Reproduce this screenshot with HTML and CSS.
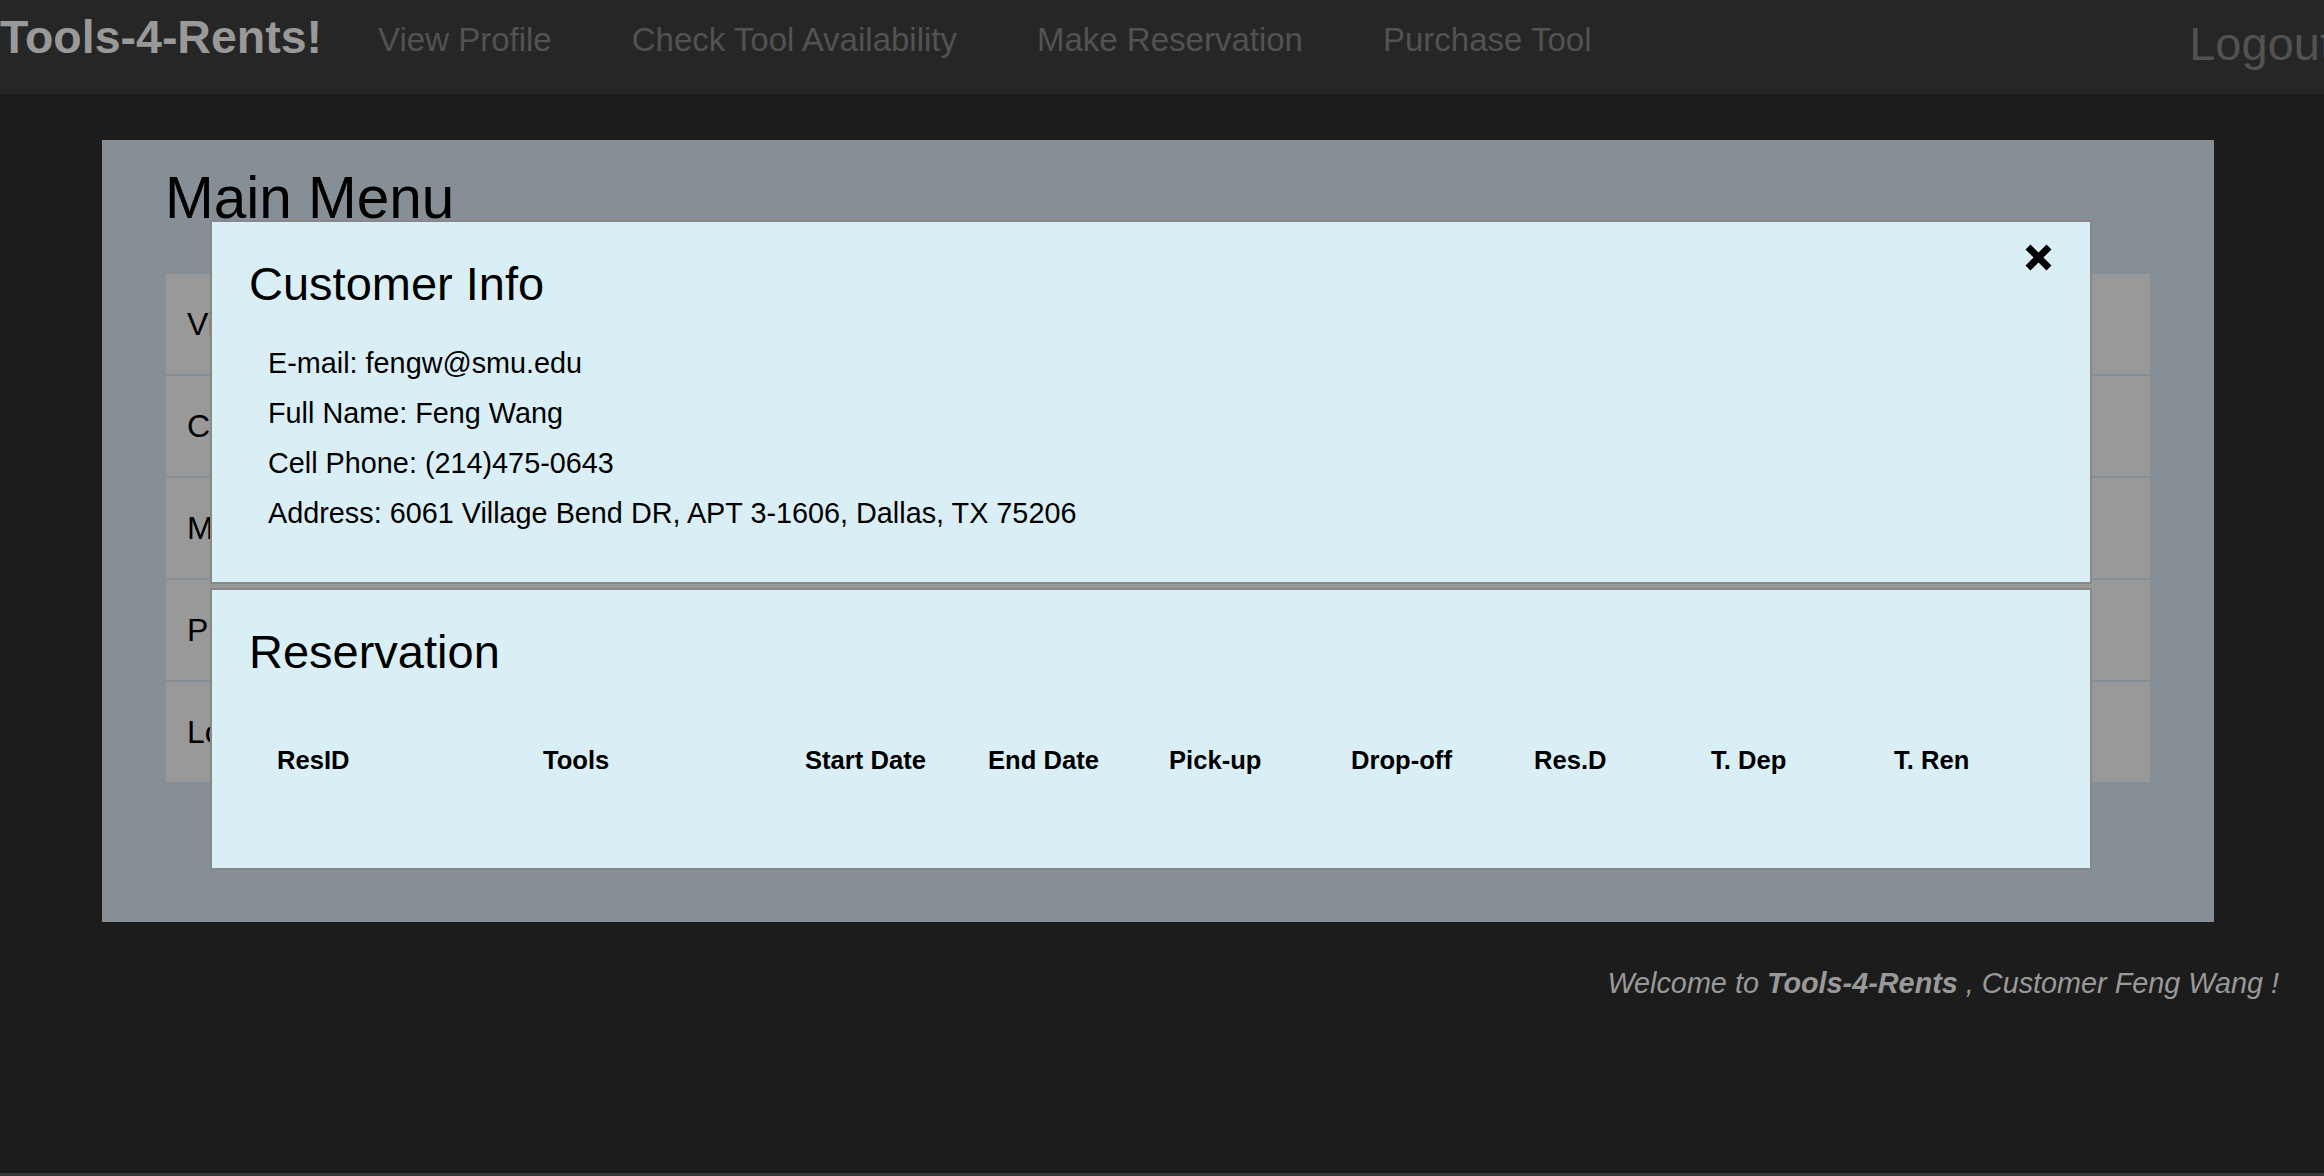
FILE: index.html
```html
<!DOCTYPE html>
<html lang="en">
<head>
<meta charset="utf-8">
<title>Tools-4-Rents!</title>
<link rel="stylesheet" href="styles.css">
</head>
<body>
<header class="navbar">
  <a class="brand">Tools-4-Rents!</a>
  <nav class="nav-links">
    <a class="nav-link">View Profile</a>
    <a class="nav-link">Check Tool Availability</a>
    <a class="nav-link">Make Reservation</a>
    <a class="nav-link">Purchase Tool</a>
  </nav>
  <a class="logout">Logout</a>
</header>

<main class="page">
  <section class="panel">
    <h1 class="panel-title">Main Menu</h1>
    <ul class="menu-list">
      <li class="menu-item">View Profile</li>
      <li class="menu-item">Check Tool Availability</li>
      <li class="menu-item">Make Reservation</li>
      <li class="menu-item">Purchase Tool</li>
      <li class="menu-item">Logout</li>
    </ul>
  </section>
  <p class="welcome">Welcome to <b>Tools-4-Rents</b> , Customer Feng Wang !</p>

  <div class="modal">
    <div class="modal-box info-box">
      <button class="close" aria-label="Close">
        <svg viewBox="0 0 29 29" width="29" height="29"><path d="M4 4L25 25M25 4L4 25" stroke="#000" stroke-width="7" fill="none"/></svg>
      </button>
      <h2 class="modal-title">Customer Info</h2>
      <div class="info-lines">
        <p class="info-line">E-mail: fengw@smu.edu</p>
        <p class="info-line">Full Name: Feng Wang</p>
        <p class="info-line">Cell Phone: (214)475-0643</p>
        <p class="info-line">Address: 6061 Village Bend DR, APT 3-1606, Dallas, TX 75206</p>
      </div>
    </div>
    <div class="modal-box res-box">
      <h2 class="modal-title">Reservation</h2>
      <div class="res-head">
        <span>ResID</span>
        <span>Tools</span>
        <span>Start Date</span>
        <span>End Date</span>
        <span>Pick-up</span>
        <span>Drop-off</span>
        <span>Res.D</span>
        <span>T. Dep</span>
        <span>T. Ren</span>
      </div>
    </div>
  </div>
</main>
<div class="bottom-bar"></div>
</body>
</html>
```

FILE: styles.css
```css
html {
  background: #1c1c1c;
}
body {
  margin: 0;
  width: 2324px;
  height: 1176px;
  overflow: hidden;
  background: #1c1c1c;
  font-family: "Liberation Sans", Arial, Helvetica, sans-serif;
  position: relative;
}
a { text-decoration: none; }

.navbar {
  height: 94px;
  background: #262626;
  display: flex;
  align-items: flex-start;
  overflow: hidden;
}
.brand {
  font-size: 46.5px;
  line-height: 47px;
  font-weight: bold;
  color: #999999;
  margin-top: 14px;
}
.nav-links {
  display: flex;
  gap: 80px;
  margin-left: 56px;
  margin-top: 23px;
}
.nav-link {
  font-size: 33px;
  line-height: 33px;
  color: #525254;
}
.logout {
  margin-left: auto;
  margin-right: -9px;
  margin-top: 20px;
  font-size: 47px;
  line-height: 47px;
  color: #525254;
}

.page {
  position: relative;
  padding-top: 46px;
}
.panel {
  margin-left: 102px;
  width: 2112px;
  height: 782px;
  box-sizing: border-box;
  background: #858f95;
  padding: 29px 64px 0;
}
.panel-title {
  margin: 0 0 0 -1px;
  font-size: 58.5px;
  line-height: 58px;
  font-weight: normal;
  color: #000;
}
.menu-list {
  list-style: none;
  margin: 47px 0 0;
  padding: 0;
  display: flex;
  flex-direction: column;
  gap: 2px;
}
.menu-item {
  height: 100px;
  background: #999999;
  display: flex;
  align-items: center;
  padding-left: 21px;
  font-size: 32px;
  color: #000;
}

.welcome {
  margin: 47px 0 0;
  padding-right: 45px;
  text-align: right;
  font-size: 28.8px;
  line-height: 28.8px;
  font-style: italic;
  color: #999999;
}

.modal {
  position: absolute;
  left: 210px;
  top: 126px;
  width: 1882px;
  display: flex;
  flex-direction: column;
  gap: 4px;
}
.modal-box {
  position: relative;
  background: #daeef5;
  border: 2px solid #888888;
  box-sizing: border-box;
  padding: 39px 0 0 37px;
}
.info-box {
  height: 364px;
}
.res-box {
  height: 282px;
}
.close {
  position: absolute;
  top: 21px;
  right: 37px;
  width: 29px;
  height: 29px;
  padding: 0;
  border: 0;
  background: none;
  display: block;
}
.close svg { display: block; }
.modal-title {
  margin: 0;
  font-size: 47px;
  line-height: 46px;
  font-weight: normal;
  color: #000;
}
.info-lines {
  margin-top: 31px;
  padding-left: 19px;
}
.info-line {
  margin: 0;
  font-size: 28.8px;
  line-height: 50px;
  color: #000;
}
.res-head {
  margin-top: 73px;
  padding-left: 28px;
  display: grid;
  grid-template-columns: 266px 262px 183px 181px 182px 183px 177px 183px 1fr;
  font-size: 25.6px;
  line-height: 25.6px;
  font-weight: bold;
  color: #000;
}

.bottom-bar {
  position: absolute;
  left: 0;
  right: 0;
  bottom: 0;
  height: 3px;
  background: #3a3a3a;
}
```
